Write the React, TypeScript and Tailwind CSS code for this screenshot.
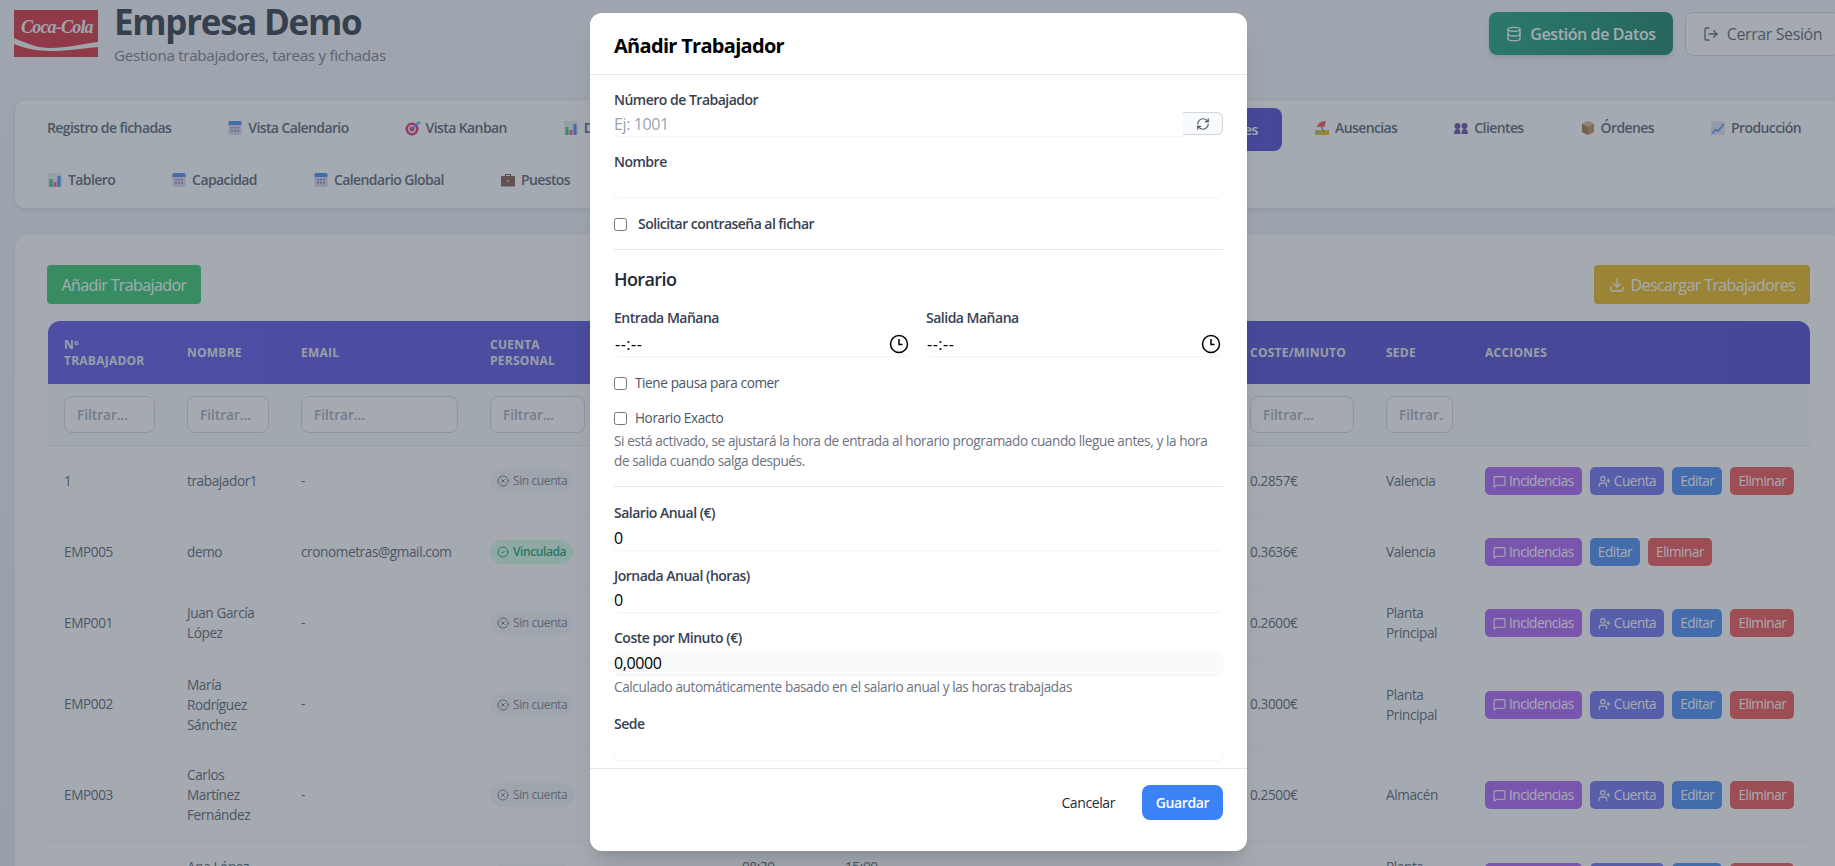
import React from 'react';
import { Database, LogOut, Download, MessageSquare, UserPlus, CircleX, CircleCheck, RefreshCw } from 'lucide-react';

// little colour pictograms used in the tab bar
const CalendarIcon = () => (
  <svg width="16" height="16" viewBox="0 0 16 16" className="shrink-0">
    <rect x="1.5" y="1" width="13" height="14" rx="1.5" fill="#d8d4f0" />
    <path d="M1.5 2.5A1.5 1.5 0 0 1 3 1h10a1.5 1.5 0 0 1 1.5 1.5V5h-13z" fill="#3b82f6" />
    <path d="M4 7h2v1.500H4zM7 7h2v1.500H7zM10 7h2v1.500h-2zM4 10h2v1.500H4zM7 10h2v1.500H7zM10 10h2v1.500h-2z" fill="#7c7ca8" />
  </svg>
);
const TargetIcon = () => (
  <svg width="16" height="16" viewBox="0 0 16 16" className="shrink-0">
    <circle cx="7" cy="9" r="6.500" fill="#e11d62" />
    <circle cx="7" cy="9" r="4.200" fill="#f3d5e0" />
    <circle cx="7" cy="9" r="2.300" fill="#e11d62" />
    <path d="M7 9l6-6" stroke="#3b82f6" strokeWidth="1.500" />
    <path d="M11.500 3l2.500-2.500.5 1.500 1.500.5L13 5z" fill="#60a5fa" />
  </svg>
);
const ChartIcon = () => (
  <svg width="16" height="16" viewBox="0 0 16 16" className="shrink-0">
    <rect x="1" y="1" width="14" height="14" fill="#e5e7eb" />
    <rect x="2.500" y="7" width="3" height="8" fill="#22c55e" />
    <rect x="6.500" y="10" width="3" height="5" fill="#ec4899" />
    <rect x="10.500" y="4" width="3" height="11" fill="#3b82f6" />
  </svg>
);
const BeachIcon = () => (
  <svg width="16" height="16" viewBox="0 0 16 16" className="shrink-0">
    <rect x="1" y="10" width="14" height="5" fill="#eab308" />
    <path d="M3 7.500C3.500 3 8 .5 12 1.500c-1 1.500-1.500 3-1 5.500-2.500-1-5.500-.5-8 .5z" fill="#ef4444" />
    <path d="M7 6l3 6" stroke="#64748b" strokeWidth="1.200" />
    <path d="M2 11l5 1-4 2z" fill="#38bdf8" />
  </svg>
);
const PeopleIcon = () => (
  <svg width="16" height="16" viewBox="0 0 16 16" className="shrink-0">
    <circle cx="4.500" cy="6" r="3" fill="#5b3fa0" />
    <circle cx="11.500" cy="6" r="3" fill="#5b3fa0" />
    <path d="M1 14c0-3 1-5 3.500-5S7.500 11 7.500 14zM8.500 14c0-3 .5-5 3-5s3.500 2 3.500 5z" fill="#5b3fa0" />
  </svg>
);
const BoxIcon = () => (
  <svg width="16" height="16" viewBox="0 0 16 16" className="shrink-0">
    <path d="M8 1l6 3v8l-6 3-6-3V4z" fill="#b9814a" />
    <path d="M8 1l6 3-6 3-6-3z" fill="#dcb083" />
    <path d="M8 7v8l-6-3V4z" fill="#a06c3a" />
  </svg>
);
const LineIcon = () => (
  <svg width="16" height="16" viewBox="0 0 16 16" className="shrink-0">
    <rect x="1" y="1" width="14" height="14" fill="#e4e4f0" />
    <path d="M1 4.500h14M1 8h14M1 11.500h14M4.500 1v14M8 1v14M11.500 1v14" stroke="#c9c9de" strokeWidth=".5" />
    <path d="M2 13.500l4-4 2 1.500 6-7" stroke="#3b82f6" strokeWidth="1.500" fill="none" />
  </svg>
);
const BriefcaseIcon = () => (
  <svg width="16" height="16" viewBox="0 0 16 16" className="shrink-0">
    <path d="M5.500 4V2.500h5V4" stroke="#6b4a3a" strokeWidth="1.200" fill="none" />
    <rect x="1" y="4" width="14" height="10.500" rx="1" fill="#7a4f3f" />
    <rect x="1" y="8.500" width="14" height="1" fill="#5f3b2e" />
    <rect x="6.800" y="8" width="2.400" height="2" fill="#d9b48a" />
  </svg>
);

const NavItem = ({ icon, label }: { icon?: React.ReactNode; label: string }) => (
  <div className="flex h-[43px] shrink-0 items-center gap-[5px] px-6 pb-[3px] text-sm font-semibold tracking-[-0.6px] text-[#4b5563]">
    {icon}
    <span>{label}</span>
  </div>
);

const ActionButton = ({ className, children }: { className: string; children: React.ReactNode }) => (
  <button className={`flex h-7 items-center gap-[3px] rounded-[5px] px-2 text-[13.6px] tracking-[-0.5px] text-white ${className}`}>{children}</button>
);

const Incidencias = () => (
  <ActionButton className="bg-[#a855f7]">
    <MessageSquare size={13} />
    Incidencias
  </ActionButton>
);
const Cuenta = () => (
  <ActionButton className="bg-[#6366f1]">
    <UserPlus size={13} />
    Cuenta
  </ActionButton>
);
const Editar = () => <ActionButton className="bg-[#3b82f6]">Editar</ActionButton>;
const Eliminar = () => <ActionButton className="bg-[#ef4444]">Eliminar</ActionButton>;

const SinCuenta = () => (
  <span className="inline-flex h-6 items-center gap-1 rounded-full bg-[#f3f4f6] px-[7px] text-xs font-medium text-[#6b7280]">
    <CircleX size={12} />
    Sin cuenta
  </span>
);
const Vinculada = () => (
  <span className="inline-flex h-6 items-center gap-1 rounded-full bg-[#d1fae5] px-[7px] text-xs font-semibold text-[#059669]">
    <CircleCheck size={12} />
    Vinculada
  </span>
);

const colWidths = ['w-[123px]', 'w-[114px]', 'w-[189px]', 'w-[127px]', 'w-[125px]', 'w-[103px]', 'w-[103px]', 'w-[100px]', 'w-[100px]', 'w-[102px]', 'w-[136px]', 'w-[99px]', 'w-[341px]'];

const rows = [
  { num: '1', name: 'trabajador1', email: '-', linked: false, coste: '0.2857€', sede: 'Valencia', account: true, h: 'h-[72px]' },
  { num: 'EMP005', name: 'demo', email: 'cronometras@gmail.com', linked: true, coste: '0.3636€', sede: 'Valencia', account: false, h: 'h-[70px]' },
  { num: 'EMP001', name: 'Juan García López', email: '-', linked: false, coste: '0.2600€', sede: 'Planta Principal', account: true, h: 'h-[72px]' },
  { num: 'EMP002', name: 'María Rodríguez Sánchez', email: '-', linked: false, coste: '0.3000€', sede: 'Planta Principal', account: true, h: 'h-[91px]' },
  { num: 'EMP003', name: 'Carlos Martínez Fernández', email: '-', linked: false, coste: '0.2500€', sede: 'Almacén', account: true, h: 'h-[90px]' },
  { num: 'EMP004', name: 'Ana López Ruiz', email: '-', linked: false, coste: '0.2700€', sede: 'Planta Principal', account: true, h: 'h-[74px]', start: '08:30', end: '15:00' },
];

const Filter = () => (
  <input
    placeholder="Filtrar..."
    className="h-[37px] w-full rounded-lg border border-[#d1d5db] bg-white pr-2 pl-3 text-[13.6px] font-semibold tracking-normal placeholder:text-[#9ca3af]"
  />
);

const Th = ({ children }: { children?: React.ReactNode }) => (
  <th className="px-4 text-left text-xs leading-4 font-bold tracking-[0.02em] text-[#e5e7eb] uppercase">{children}</th>
);

const Label = ({ children }: { children: React.ReactNode }) => (
  <label className="block h-5 pt-px text-sm leading-5 font-semibold tracking-[-0.5px] text-[#374151]">{children}</label>
);

const TextInput = ({ value, readOnly, className }: { value?: string; readOnly?: boolean; className?: string }) => (
  <input
    defaultValue={value}
    readOnly={readOnly}
    className={`block h-6 w-full rounded-md text-base text-black shadow-[0_1px_2px_rgba(0,0,0,0.06)] ${className ?? 'bg-white'}`}
  />
);

const TimeField = ({ label }: { label: string }) => (
  <div className="min-w-0 flex-1">
    <Label>{label}</Label>
    <div className="mt-1 flex h-[25px] w-full items-center justify-between rounded-md bg-white pr-[2px] pl-[1px] text-base tracking-[0.5px] text-black shadow-[0_1px_2px_rgba(0,0,0,0.06)]">
      <span>--:--</span>
      <svg width="20" height="20" viewBox="0 0 20 20" fill="none" stroke="#000" strokeWidth="1.500">
        <circle cx="10" cy="10" r="8.500" />
        <path d="M10 5v5.500h3.500" />
      </svg>
    </div>
  </div>
);

export default function App() {
  return (
    <div className="relative h-[866px] w-[1835px] overflow-hidden bg-gradient-to-b from-[#f1f5f9] to-[#e5e9f0] font-['Open_Sans',sans-serif] tracking-[-0.025em]">
      <div className="w-[1844px] pl-[14px]">
        {/* top bar */}
        <div className="flex h-[99px] items-start justify-between pr-[4px]">
          <div className="flex">
            <div className="relative mt-[10px] h-[47px] w-[84px] overflow-hidden bg-[#d41c2c]">
              <span className="absolute top-[5px] left-[7px] font-['Liberation_Serif',serif] text-[18px] leading-[24px] font-bold tracking-[-0.8px] whitespace-nowrap text-[#f5f5f5] italic">
                Coca-Cola
              </span>
              <svg viewBox="0 0 84 47" className="absolute inset-0">
                <path d="M0 28c14 6 24 10 36 10 16 0 32-4 48-6v5c-20 2-32 4-48 4-14 0-26-3-36-7z" fill="#f5f5f5" />
              </svg>
            </div>
            <div className="ml-4">
              <h1 className="mt-[2px] text-[35px] leading-10 font-bold tracking-[-1.3px] text-[#1f2937]">Empresa Demo</h1>
              <p className="mt-[2px] text-[15.2px] leading-[22px] tracking-[-0.3px] text-[#6b7280]">Gestiona trabajadores, tareas y fichadas</p>
            </div>
          </div>
          <div className="mt-3 flex gap-3">
            <button className="flex h-[43px] w-[184px] items-center justify-center gap-2 rounded-lg bg-gradient-to-r from-[#0a9c72] to-[#047857] text-base font-semibold text-white shadow-md">
              <Database size={16} />
              Gestión de Datos
            </button>
            <button className="flex h-[44px] w-[155px] items-center justify-center gap-2 rounded-lg border border-[#d1d5db] bg-white text-base font-medium text-[#4b5563]">
              <LogOut size={16} />
              Cerrar Sesión
            </button>
          </div>
        </div>

        {/* tabs */}
        <div className="flex h-[110px] flex-col gap-[9px] rounded-xl border border-[#e2e8f0] bg-white/90 p-2 shadow-sm">
          <div className="flex gap-2">
            <div className="flex w-[1091px] shrink-0 gap-2">
              <NavItem label="Registro de fichadas" />
              <NavItem icon={<CalendarIcon />} label="Vista Calendario" />
              <NavItem icon={<TargetIcon />} label="Vista Kanban" />
              <NavItem icon={<ChartIcon />} label="Dashboard" />
            </div>
            <div className="flex h-[43px] w-[160px] shrink-0 items-center justify-end rounded-lg bg-gradient-to-r from-[#4f46e5] to-[#4338ca] px-6 text-sm font-semibold text-white">
              Trabajadores
            </div>
            <NavItem icon={<BeachIcon />} label="Ausencias" />
            <NavItem icon={<PeopleIcon />} label="Clientes" />
            <NavItem icon={<BoxIcon />} label="Órdenes" />
            <NavItem icon={<LineIcon />} label="Producción" />
          </div>
          <div className="flex gap-2">
            <NavItem icon={<ChartIcon />} label="Tablero" />
            <NavItem icon={<CalendarIcon />} label="Capacidad" />
            <NavItem icon={<CalendarIcon />} label="Calendario Global" />
            <NavItem icon={<BriefcaseIcon />} label="Puestos" />
          </div>
        </div>

        {/* workers card */}
        <div className="mt-6 rounded-t-2xl border border-[#e2e8f0] bg-white px-[33px] pt-[31px]">
          <div className="flex w-[1762px] items-center justify-between">
            <button className="-ml-px h-[39px] w-[154px] rounded bg-[#22c55e] text-base tracking-[-0.6px] text-white">Añadir Trabajador</button>
            <button className="flex h-[39px] w-[216px] items-center justify-center gap-[6px] rounded bg-[#eab308] text-base tracking-[-0.6px] text-white">
              <Download size={16} />
              Descargar Trabajadores
            </button>
          </div>
          <div className="mt-[17px] w-[1762px] overflow-hidden rounded-t-xl">
            <table className="w-[1762px] table-fixed border-collapse text-[13.6px] text-[#4b5563]">
              <colgroup>
                {colWidths.map((w, i) => (
                  <col key={i} className={w} />
                ))}
              </colgroup>
              <thead>
                <tr className="h-[63px] bg-gradient-to-r from-[#4f46e5] to-[#4338ca]">
                  <Th>Nº Trabajador</Th>
                  <Th>Nombre</Th>
                  <Th>Email</Th>
                  <Th>Cuenta Personal</Th>
                  <Th />
                  <Th />
                  <Th />
                  <Th />
                  <Th />
                  <Th />
                  <Th>Coste/Minuto</Th>
                  <Th>Sede</Th>
                  <Th>Acciones</Th>
                </tr>
              </thead>
              <tbody>
                <tr className="h-[61px] border-b border-[#e5e7eb] bg-[#f9fafb]">
                  {colWidths.map((_, i) => (
                    <td key={i} className="px-4">
                      {i < 4 || i === 10 || i === 11 ? <Filter /> : null}
                    </td>
                  ))}
                </tr>
                {rows.map((r) => (
                  <tr key={r.num} className={`border-b border-[#f3f4f6] bg-white ${r.h}`}>
                    <td className="px-4">{r.num}</td>
                    <td className="px-4 leading-5">{r.name}</td>
                    <td className="px-4">{r.email}</td>
                    <td className="px-4">{r.linked ? <Vinculada /> : <SinCuenta />}</td>
                    <td />
                    <td className="px-4 leading-5">
                      {r.start && (
                        <>
                          {r.start}
                          <br />
                          {r.start}
                        </>
                      )}
                    </td>
                    <td className="px-4 leading-5">
                      {r.end && (
                        <>
                          {r.end}
                          <br />
                          {r.end}
                        </>
                      )}
                    </td>
                    <td />
                    <td />
                    <td />
                    <td className="px-4">{r.coste}</td>
                    <td className="px-4 leading-5">{r.sede}</td>
                    <td className="px-4">
                      <div className="flex gap-2">
                        <Incidencias />
                        {r.account && <Cuenta />}
                        <Editar />
                        <Eliminar />
                      </div>
                    </td>
                  </tr>
                ))}
              </tbody>
            </table>
          </div>
        </div>
      </div>

      {/* modal */}
      <div className="absolute inset-0 flex items-start justify-center bg-[#4b5563]/50 pl-[2px]">
        <div className="mt-[13px] flex h-[838px] w-[657px] flex-col overflow-hidden rounded-xl bg-white shadow-xl">
          <div className="flex h-[62px] shrink-0 items-center border-b border-[#e5e7eb] px-6 pt-[4px]">
            <h2 className="text-xl font-bold tracking-[-0.7px] text-black">Añadir Trabajador</h2>
          </div>
          <div className="flex-1 overflow-hidden px-6 pt-[14px]">
            <Label>Número de Trabajador</Label>
            <div className="mt-[3px] flex">
              <input
                placeholder="Ej: 1001"
                className="h-6 min-w-0 flex-1 rounded-l-md bg-white text-base shadow-[0_1px_2px_rgba(0,0,0,0.06)] placeholder:text-[#9ca3af]"
              />
              <button className="flex h-[23px] w-10 items-center justify-center rounded-r-md border border-l-0 border-[#d1d5db] bg-[#f9fafb] text-[#4b5563]">
                <RefreshCw size={14} />
              </button>
            </div>
            <div className="mt-[15px]">
              <Label>Nombre</Label>
              <div className="mt-[2px]">
                <TextInput />
              </div>
            </div>
            <label className="mt-[16px] flex h-5 items-center gap-[11px] pt-[2px] text-sm font-semibold tracking-[-0.55px] text-[#374151]">
              <input type="checkbox" className="m-0" />
              Solicitar contraseña al fichar
            </label>
            <div className="mt-[16px] border-t border-[#e5e7eb]" />
            <h3 className="mt-[15px] text-lg leading-7 font-semibold tracking-[-0.6px] text-[#1f2937]">Horario</h3>
            <div className="mt-[14px] flex gap-[15px]">
              <TimeField label="Entrada Mañana" />
              <TimeField label="Salida Mañana" />
            </div>
            <label className="mt-[16px] flex h-5 items-center gap-[8px] pt-[2px] text-[13.6px] text-[#4b5563]">
              <input type="checkbox" className="m-0" />
              Tiene pausa para comer
            </label>
            <label className="mt-[15px] flex h-5 items-center gap-[8px] pt-[2px] text-[13.6px] text-[#4b5563]">
              <input type="checkbox" className="m-0" />
              Horario Exacto
            </label>
            <p className="mt-[4px] text-[13.6px] leading-5 text-[#6b7280]">
              Si está activado, se ajustará la hora de entrada al horario programado cuando llegue antes, y la hora de salida cuando salga después.
            </p>
            <div className="mt-[15px] border-t border-[#e5e7eb]" />
            <div className="mt-[15px]">
              <Label>Salario Anual (€)</Label>
              <div className="mt-[4px]">
                <TextInput value="0" />
              </div>
            </div>
            <div className="mt-[15px]">
              <Label>Jornada Anual (horas)</Label>
              <div className="mt-[3px]">
                <TextInput value="0" />
              </div>
            </div>
            <div className="mt-[15px]">
              <Label>Coste por Minuto (€)</Label>
              <div className="mt-[4px]">
                <TextInput value="0,0000" readOnly className="bg-[#f9fafb]" />
              </div>
            </div>
            <p className="mt-[2px] text-[13.6px] leading-5 text-[#6b7280]">Calculado automáticamente basado en el salario anual y las horas trabajadas</p>
            <div className="mt-[16px]">
              <Label>Sede</Label>
              <div className="mt-[3px]">
                <TextInput />
              </div>
            </div>
          </div>
          <div className="flex shrink-0 items-center justify-end gap-[27px] border-t border-[#e5e7eb] px-6 pt-4 pb-[31px]">
            <button className="text-sm font-medium text-[#1f2937]">Cancelar</button>
            <button className="h-[35px] w-[81px] rounded-lg bg-[#3b82f6] text-sm font-semibold text-white">Guardar</button>
          </div>
        </div>
      </div>
    </div>
  );
}
